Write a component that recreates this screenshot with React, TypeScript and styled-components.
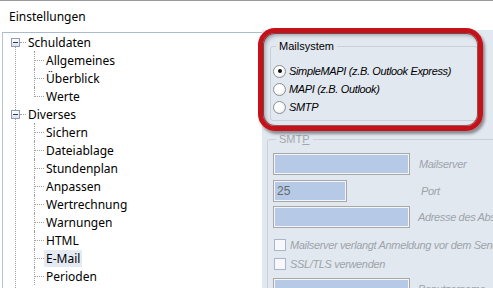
import styled, { createGlobalStyle } from 'styled-components';

const GlobalStyle = createGlobalStyle`
  body {
    margin: 0;
    background: #ffffff;
    overflow: hidden;
  }
`;

const uiFont = `"Noto Sans", "Open Sans", sans-serif`;
const classicFont = `"Liberation Sans", Arial, sans-serif`;

const Window = styled.div`
  position: relative;
  width: 493px;
  height: 288px;
  overflow: hidden;
  background: #ffffff;
  border-top: 1px solid #9a9a9a;
  box-sizing: border-box;
`;

const TitleBar = styled.div`
  height: 31px;
  padding-left: 9px;
  display: flex;
  align-items: center;
  font-family: ${uiFont};
  font-size: 12px;
  color: #000;
`;

const Body = styled.div`
  display: flex;
  height: 256px;
`;

const TreePanel = styled.div`
  position: relative;
  flex: 0 0 259px;
  margin-left: 2px;
  border-left: 1px solid #b3c2d8;
  border-top: 1px solid #a9bbd3;
  font-family: ${uiFont};
  font-size: 12px;
  color: #000;
  &::before {
    content: '';
    position: absolute;
    left: 12px;
    top: 14px;
    bottom: 0;
    border-left: 1px dotted #a0a0a0;
  }
`;

const NodeRow = styled.div<{ $child?: boolean; $last?: boolean }>`
  position: relative;
  height: 18px;
  display: flex;
  align-items: center;
  padding-left: ${(p) => (p.$child ? 41 : 23)}px;
  &::before {
    content: '';
    position: absolute;
    display: ${(p) => (p.$child ? 'block' : 'none')};
    left: 31px;
    top: 0;
    height: ${(p) => (p.$last ? 10 : 18)}px;
    border-left: 1px dotted #a0a0a0;
  }
  &::after {
    content: '';
    position: absolute;
    left: ${(p) => (p.$child ? 32 : 17)}px;
    top: 9px;
    width: ${(p) => (p.$child ? 9 : 6)}px;
    border-top: 1px dotted #a0a0a0;
  }
`;

const Expander = styled.div`
  position: absolute;
  left: 8px;
  top: 5px;
  width: 7px;
  height: 7px;
  border: 1px solid #8e9bb0;
  background: linear-gradient(#ffffff, #dbe2ec);
  z-index: 1;
  &::after {
    content: '';
    position: absolute;
    left: 1px;
    top: 3px;
    width: 5px;
    height: 1px;
    background: #2a3a58;
  }
`;

const NodeLabel = styled.span<{ $selected?: boolean }>`
  padding: 0 2px;
  line-height: 17px;
  background: ${(p) => (p.$selected ? '#e4eaf3' : 'transparent')};
`;

const SettingsPanel = styled.div`
  flex: 1 1 auto;
  min-width: 0;
  margin-top: -2px;
  padding-top: 10px;
  background: #e2e8f0;
  font-family: ${classicFont};
  font-size: 11px;
  letter-spacing: -0.35px;
  display: flex;
  flex-direction: column;
`;

const Group = styled.fieldset<{ $indent: number; $right: number }>`
  margin: 0 ${(p) => p.$right}px 0 ${(p) => p.$indent}px;
  padding: 0;
  border: 1px solid #c9d0d9;
  border-radius: 3px;
  min-width: 0;
`;

const Legend = styled.legend<{ $disabled?: boolean; $offset: number }>`
  margin-left: ${(p) => p.$offset}px;
  padding: 0 3px;
  line-height: 13px;
  letter-spacing: 0;
  color: ${(p) => (p.$disabled ? '#a3a7ad' : '#000')};
`;

const RadioList = styled.div`
  padding: 9px 0 4px 2px;
  display: flex;
  flex-direction: column;
`;

const OptionRow = styled.label`
  height: 18px;
  display: flex;
  align-items: center;
  gap: 3px;
  font-style: italic;
  color: #000;
`;

const RadioDot = styled.span<{ $checked?: boolean }>`
  position: relative;
  width: 11px;
  height: 11px;
  border-radius: 50%;
  border: 1px solid #8d9095;
  background: radial-gradient(circle at 35% 35%, #ffffff 40%, #dfe2e6);
  flex-shrink: 0;
  &::after {
    content: '';
    display: ${(p) => (p.$checked ? 'block' : 'none')};
    position: absolute;
    left: 3.5px;
    top: 3.5px;
    width: 4px;
    height: 4px;
    border-radius: 50%;
    background: #111;
  }
`;

const SmtpGroup = styled(Group)`
  margin-top: 12px;
`;

const SmtpBody = styled.div`
  padding: 7px 0 0 5px;
  display: flex;
  flex-direction: column;
`;

const FieldRow = styled.div<{ $gap?: number }>`
  display: flex;
  align-items: center;
  margin-top: ${(p) => p.$gap ?? 0}px;
`;

const Field = styled.div<{ $width: number }>`
  box-sizing: border-box;
  flex-shrink: 0;
  width: ${(p) => p.$width}px;
  height: 22px;
  border: 1px solid #a8a8a8;
  box-shadow: inset 0 0 0 1px #f3f5f8;
  background: #b6c9e6;
  display: flex;
  align-items: center;
  padding-left: 3px;
  color: #6a6a6a;
  font-size: 12px;
  letter-spacing: 0;
`;

const FieldLabel = styled.span<{ $offset: number }>`
  margin-left: ${(p) => p.$offset}px;
  font-style: italic;
  color: #9ea3aa;
  white-space: nowrap;
`;

const CheckRow = styled.div<{ $gap?: number }>`
  height: 19px;
  display: flex;
  align-items: center;
  gap: 4px;
  margin-top: ${(p) => p.$gap ?? 0}px;
  padding-left: 1px;
  font-style: italic;
  color: #9ea3aa;
  white-space: nowrap;
`;

const CheckBox = styled.span`
  width: 10px;
  height: 10px;
  border: 1px solid #aab6c8;
  background: #f6f8fb;
  flex-shrink: 0;
`;

const Highlight = styled.div`
  position: absolute;
  left: 258px;
  top: 27px;
  width: 225px;
  height: 103px;
  box-sizing: border-box;
  border: 5px solid #c4121a;
  border-radius: 17px;
  box-shadow: 2px 3px 3px rgba(0, 0, 0, 0.4),
    inset 2px 2px 4px rgba(0, 0, 0, 0.35),
    inset 0 0 0 1px rgba(120, 0, 0, 0.6);
  pointer-events: none;
`;

const schuldaten = ['Allgemeines', 'Überblick', 'Werte'];
const diverses = [
  'Sichern',
  'Dateiablage',
  'Stundenplan',
  'Anpassen',
  'Wertrechnung',
  'Warnungen',
  'HTML',
  'E-Mail',
  'Perioden',
];

export default function App() {
  return (
    <Window>
      <GlobalStyle />
      <TitleBar>Einstellungen</TitleBar>
      <Body>
        <TreePanel>
          <NodeRow>
            <Expander />
            <NodeLabel>Schuldaten</NodeLabel>
          </NodeRow>
          {schuldaten.map((item, i) => (
            <NodeRow key={item} $child $last={i === schuldaten.length - 1}>
              <NodeLabel>{item}</NodeLabel>
            </NodeRow>
          ))}
          <NodeRow>
            <Expander />
            <NodeLabel>Diverses</NodeLabel>
          </NodeRow>
          {diverses.map((item) => (
            <NodeRow key={item} $child>
              <NodeLabel $selected={item === 'E-Mail'}>{item}</NodeLabel>
            </NodeRow>
          ))}
        </TreePanel>
        <SettingsPanel>
          <Group $indent={8} $right={15}>
            <Legend $offset={5}>Mailsystem</Legend>
            <RadioList>
              <OptionRow>
                <RadioDot $checked />
                SimpleMAPI (z.B. Outlook Express)
              </OptionRow>
              <OptionRow>
                <RadioDot />
                MAPI (z.B. Outlook)
              </OptionRow>
              <OptionRow>
                <RadioDot />
                SMTP
              </OptionRow>
            </RadioList>
          </Group>
          <SmtpGroup $indent={5} $right={-30}>
            <Legend $disabled $offset={8}>
              SMT<u>P</u>
            </Legend>
            <SmtpBody>
              <FieldRow>
                <Field $width={137} />
                <FieldLabel $offset={9}>Mailserver</FieldLabel>
              </FieldRow>
              <FieldRow $gap={5}>
                <Field $width={74}>25</Field>
                <FieldLabel $offset={74}>Port</FieldLabel>
              </FieldRow>
              <FieldRow $gap={4}>
                <Field $width={137} />
                <FieldLabel $offset={8}>Adresse des Absenders</FieldLabel>
              </FieldRow>
              <CheckRow $gap={7}>
                <CheckBox />
                Mailserver verlangt Anmeldung vor dem Senden
              </CheckRow>
              <CheckRow>
                <CheckBox />
                SSL/TLS verwenden
              </CheckRow>
              <FieldRow $gap={5}>
                <Field $width={137} />
                <FieldLabel $offset={8}>Benutzername</FieldLabel>
              </FieldRow>
            </SmtpBody>
          </SmtpGroup>
        </SettingsPanel>
      </Body>
      <Highlight />
    </Window>
  );
}
